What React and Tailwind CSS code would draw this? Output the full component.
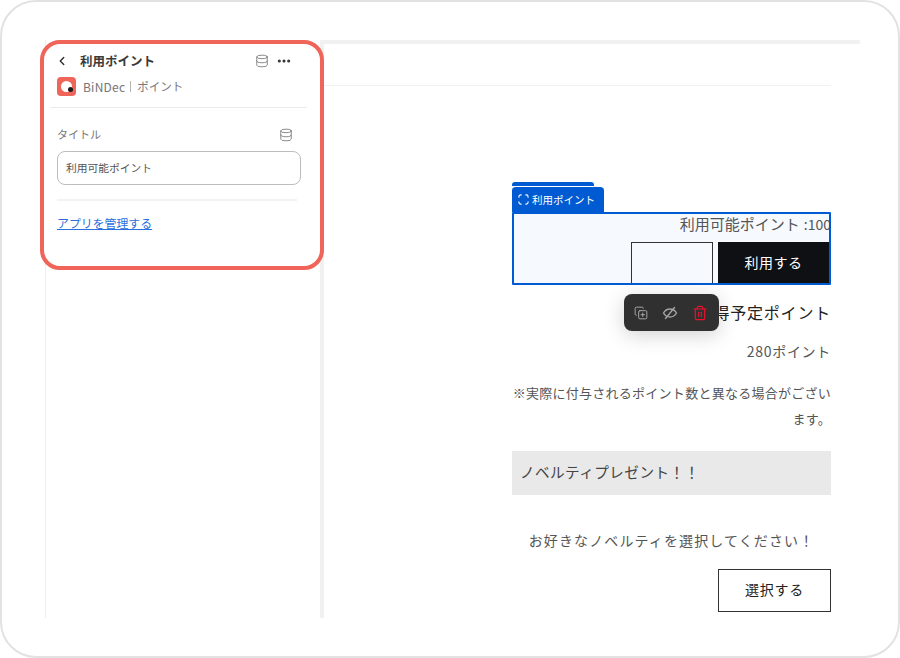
import React from 'react';
import { ChevronLeft, CopyPlus, Database, Ellipsis, Trash2 } from 'lucide-react';

const FONT = 'font-["Noto_Sans_CJK_JP","Noto_Sans",sans-serif]';

function FocusIcon() {
  return (
    <svg width="11" height="11" viewBox="0 0 12 12" fill="none" stroke="white" strokeWidth="1.2" strokeLinecap="round">
      <path d="M1 3.5V3a2 2 0 0 1 2-2h.5M8.5 1H9a2 2 0 0 1 2 2v.5M11 8.5V9a2 2 0 0 1-2 2h-.5M3.5 11H3a2 2 0 0 1-2-2v-.5" />
    </svg>
  );
}

function HiddenIcon() {
  return (
    <svg width="16" height="16" viewBox="0 0 16 16" fill="none" stroke="#a3a3a3" strokeWidth="1.4" strokeLinecap="round">
      <path d="M1.5 8C3 5.4 5.3 4 8 4s5 1.4 6.5 4c-1.5 2.6-3.8 4-6.5 4S3 10.6 1.5 8Z" />
      <path d="M12.5 2.5 3.5 13.5" />
    </svg>
  );
}

function AppLogo() {
  return (
    <div className="flex h-[19px] w-[19px] items-center justify-center rounded-[4px] bg-[#f0655a]">
      <div className="relative h-[11px] w-[11px] rounded-full bg-white">
        <div className="absolute bottom-0 right-[-1px] h-[5px] w-[5px] rounded-full bg-[#1a1a1a]" />
      </div>
    </div>
  );
}

function SettingsPanel() {
  return (
    <div className="relative z-10 -ml-[6px] h-[230px] w-[284px] rounded-[20px] border-4 border-[#ef6559] bg-white">
      <div className="ml-[6px] mr-[13px] flex h-[64px] flex-col border-b border-[#ebebeb] px-[7px]">
        <div className="flex h-[31px] items-center pt-[3px]">
          <ChevronLeft size={14} strokeWidth={2.4} className="ml-[-2px] text-[#303030]" />
          <span className="ml-[11px] text-[12.5px] font-bold text-[#3a3a3a]">利用ポイント</span>
          <Database size={14} strokeWidth={1.5} className="ml-auto text-[#7a7a7a]" />
          <Ellipsis size={16} strokeWidth={2.6} className="ml-[7px] mr-[8px] text-[#303030]" />
        </div>
        <div className="mt-[2px] flex items-center">
          <AppLogo />
          <span className="ml-[7px] text-[12px] tracking-[0.02em] text-[#757575]">BiNDec</span>
          <span className="ml-[5px] mr-[6px] h-[11px] w-px bg-[#b5b5b5]" />
          <span className="text-[11.5px] text-[#757575]">ポイント</span>
        </div>
      </div>
      <div className="pl-[13px] pr-[19px] pt-[17px]">
        <div className="flex h-[18px] items-center justify-between">
          <span className="text-[11px] text-[#757575]">タイトル</span>
          <Database size={14} strokeWidth={1.5} className="mr-[8px] mt-[2px] text-[#7a7a7a]" />
        </div>
        <div className="mt-[8px] flex h-[34px] items-center rounded-[8px] border border-[#bdbdbd] px-[8px] text-[10.75px] text-[#555]">
          利用可能ポイント
        </div>
        <div className="mr-[4px] mt-[14px] h-[2px] bg-[#f3f3f3]" />
        <a href="#" className="mt-[13px] block text-[11.9px] leading-[18px] text-[#2a6fdb] underline">
          アプリを管理する
        </a>
      </div>
    </div>
  );
}

function FloatingToolbar() {
  return (
    <div className="absolute left-[112px] top-[112px] z-10 flex h-[37px] w-[95px] items-center justify-center gap-[14px] rounded-[8px] bg-[#303030] pr-[1px] shadow-[0_4px_20px_rgba(0,0,0,0.18)]">
      <CopyPlus size={14} strokeWidth={1.5} className="text-[#b5b5b5]" />
      <HiddenIcon />
      <Trash2 size={16} strokeWidth={1.8} className="text-[#e8132d]" />
    </div>
  );
}

function SelectedBlock() {
  return (
    <div>
      <div className="h-[4px] w-[82px] rounded-t-[3px] bg-[#005bd3]" />
      <div className="flex h-[26px] w-[92px] items-center gap-[3px] rounded-t-[4px] border-t border-white bg-[#005bd3] pl-[6px] text-[10.5px] text-white">
        <FocusIcon />
        <span>利用ポイント</span>
      </div>
      <div className="h-[73px] overflow-hidden rounded-[1px] border-2 border-[#005bd3] bg-[#f6f9fe]">
        <div className="mr-[-2px] flex h-[28px] items-start justify-end text-[15px] leading-[20px] text-[#555]">
          利用可能ポイント<span className="ml-[4px] text-[14px]">:100</span>
        </div>
        <div className="flex h-[43px] justify-end gap-[5px]">
          <div className="w-[82px] border border-b-0 border-[#333]" />
          <div className="flex w-[111px] items-center justify-center bg-[#0f1014] pb-[2px] text-[14px] tracking-[0.04em] text-white">
            利用する
          </div>
        </div>
      </div>
    </div>
  );
}

export default function App() {
  return (
    <div className={`h-[658px] w-[900px] overflow-hidden rounded-[36px] border-2 border-[#e2e2e2] bg-white ${FONT}`}>
      <div className="ml-[43px] mt-[38px] flex h-[578px] w-[815px]">
        <aside className="w-[279px] shrink-0 border-l border-r-4 border-l-[#eeeeee] border-r-[#f1f1f1]">
          <SettingsPanel />
        </aside>
        <main className="min-w-0 flex-1">
          <div className="h-[4px] bg-[#f1f1f1]" />
          <div className="h-[42px] w-[507px] border-b border-[#f1f1f1]" />
          <div className="w-[507px] pl-[188px] pt-[96px]">
            <div className="relative w-[319px]">
              <SelectedBlock />
              <FloatingToolbar />
              <p className="mt-[13px] h-[28px] text-right text-[16px] leading-[28px] tracking-[0.05em] text-[#222]">
                獲得予定ポイント
              </p>
              <p className="mt-[13px] text-right text-[14px] leading-[24px] tracking-[0.05em] text-[#555]">280ポイント</p>
              <p className="mt-[17px] text-right text-[13px] leading-[26px] tracking-[0.02em] text-[#555]">
                ※実際に付与されるポイント数と異なる場合がございます。
              </p>
              <div className="mt-[19px] flex h-[44px] items-center bg-[#e9e9e9] pb-[2px] pl-[8px] text-[14.6px] tracking-[0.03em] text-[#444]">
                ノベルティプレゼント！！
              </div>
              <p className="mt-[33px] text-center text-[14px] leading-[24px] tracking-[0.08em] text-[#555]">
                お好きなノベルティを選択してください！
              </p>
              <div className="ml-auto mt-[17px] flex h-[43px] w-[113px] items-center justify-center border border-[#333] pb-[2px] text-[14px] tracking-[0.05em] text-[#222]">
                選択する
              </div>
            </div>
          </div>
        </main>
      </div>
    </div>
  );
}
